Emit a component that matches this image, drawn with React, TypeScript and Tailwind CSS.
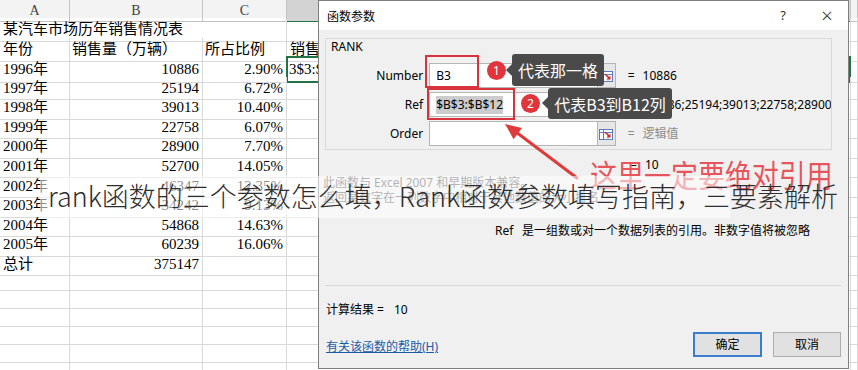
import React from "react";

const rows: [string, string, string][] = [
  ["1996年", "10886", "2.90%"],
  ["1997年", "25194", "6.72%"],
  ["1998年", "39013", "10.40%"],
  ["1999年", "22758", "6.07%"],
  ["2000年", "28900", "7.70%"],
  ["2001年", "52700", "14.05%"],
  ["2002年", "46347", "12.35%"],
  ["2003年", "34242", "9.13%"],
  ["2004年", "54868", "14.63%"],
  ["2005年", "60239", "16.06%"],
  ["总计", "375147", ""],
];

const cols = "grid grid-cols-[70px_133px_84px_564px_1fr]";
const cell = "border-r border-b border-[#d9d9d9] flex items-center whitespace-nowrap overflow-visible";

function Sheet() {
  return (
    <div className="flex flex-col font-['Liberation_Serif','Noto_Sans_CJK_SC',serif] text-[15px] text-black">
      <div className={`${cols} h-[18px] bg-[#f3f3f3] text-[14px] text-[#444]`}>
        {["A", "B", "C", "D", ""].map((l, i) => (
          <div
            key={i}
            className={`border-r border-b border-[#c4c4c4] flex items-center justify-center ${i === 3 ? "bg-[#d3d3d3] border-b-[#217346]" : ""}`}
          >
            {l}
          </div>
        ))}
      </div>
      <div className={`${cols} h-[20px]`}>
        <div className={`${cell} col-span-3 pl-[3px]`}>某汽车市场历年销售情况表</div>
        <div className={cell}></div>
        <div className={cell}></div>
      </div>
      <div className={`${cols} h-[19px]`}>
        <div className={`${cell} pl-[3px]`}>年份</div>
        <div className={`${cell} pl-[2px]`}>销售量（万辆）</div>
        <div className={`${cell} pl-[2px]`}>所占比例</div>
        <div className={`${cell} pl-[3px]`}>销售</div>
        <div className={cell}></div>
      </div>
      {rows.map((r, i) => (
        <div key={i} className={`${cols} h-[19.6px]`}>
          <div className={`${cell} pl-[3px]`}>{r[0]}</div>
          <div className={`${cell} justify-end pr-[3px]`}>{r[1]}</div>
          <div className={`${cell} justify-end pr-[3px]`}>{r[2]}</div>
          {i === 0 ? (
            <div className="border-2 border-[#217346] flex items-center whitespace-nowrap pl-[1px] -mt-[1px] -ml-[1px]">3$3:$B$12)</div>
          ) : (
            <div className={cell}></div>
          )}
          <div className={cell}></div>
        </div>
      ))}
      {[0, 1, 2, 3, 4, 5].map((i) => (
        <div key={i} className={`${cols} h-[18px]`}>
          <div className={cell}></div>
          <div className={cell}></div>
          <div className={cell}></div>
          <div className={cell}></div>
          <div className={cell}></div>
        </div>
      ))}
    </div>
  );
}

function Picker() {
  return (
    <div className="w-[18px] h-full bg-[#e6e6e6] border border-[#b5b5b5] border-l-0 flex items-center justify-center">
      <svg width="14" height="14" viewBox="0 0 14 14">
        <rect x="0.5" y="2.5" width="13" height="10" fill="#fff" stroke="#5a7db8" />
        <line x1="0.5" y1="5.5" x2="13.5" y2="5.5" stroke="#5a7db8" />
        <line x1="4.5" y1="2.5" x2="4.5" y2="12.5" stroke="#5a7db8" />
        <line x1="9" y1="5.5" x2="9" y2="12.5" stroke="#9fb3d6" />
        <path d="M6 5 L11 10" stroke="#d23030" strokeWidth="1.6" />
        <path d="M11.5 6.5 L11.5 10.5 L7.5 10.5 Z" fill="#d23030" />
      </svg>
    </div>
  );
}

function Field({ label, value, selected, result, gray }: { label: string; value: string; selected?: boolean; result: string; gray?: boolean }) {
  return (
    <div className="flex items-center h-[25px]">
      <div className="w-[98px] text-right">{label}</div>
      <div className="ml-[6px] w-[170px] h-full bg-white border border-[#b5b5b5] flex items-center pl-[6px]">
        {value && <span className={selected ? "bg-[#cccccc]" : ""}>{value}</span>}
      </div>
      <Picker />
      <div className={`ml-[12px] whitespace-nowrap overflow-hidden w-[205px] ${gray ? "text-[#8c8c8c]" : ""}`}>
        <span>=</span>
        <span className="ml-[8px]">{result}</span>
      </div>
    </div>
  );
}

function Dialog() {
  return (
    <div className="absolute left-[318px] top-0 w-[531px] h-[369px] border border-[#808080] bg-[#f0f0f0] flex flex-col font-['Noto_Sans','Noto_Sans_CJK_SC',sans-serif] text-[12px] text-black">
      <div className="h-[29px] bg-white flex items-center shrink-0">
        <span className="pl-[8px] font-['Noto_Sans_CJK_SC',sans-serif]">函数参数</span>
        <span className="ml-auto w-[20px] text-center text-[13px] text-[#333]">?</span>
        <span className="ml-[24px] mr-[11px] w-[20px] text-center text-[20px] leading-none text-[#333] font-light">×</span>
      </div>
      <div className="flex-1 px-[6px] flex flex-col pr-[7px]">
        <div className="mt-[8px] h-[112px] w-[507px] border border-[#d9d9d9] flex flex-col">
          <div className="pl-[5px] leading-[14px] mt-[1px]">RANK</div>
          <div className="mt-[9px] flex flex-col gap-[4px]">
            <Field label="Number" value="B3" result="10886" />
            <Field label="Ref" value="$B$3:$B$12" selected result="{10886;25194;39013;22758;28900;52700;46347}" />
            <Field label="Order" value="" result="逻辑值" gray />
          </div>
        </div>
        <div className="mt-[5px] h-[20px] flex items-center pl-[305px]">
          <span>=</span>
          <span className="ml-[8px]">10</span>
        </div>
        <div className="leading-[15px] -ml-[2px] text-[#555]">
          <div>此函数与 Excel 2007 和早期版本兼容。</div>
          <div>返回某数字在一列数字中相对于其他数值的大小排名</div>
        </div>
        <div className="mt-[18px] h-[16px] flex items-center pl-[170px]">
          <span className="w-[27px]">Ref</span>
          <span>是一组数或对一个数据列表的引用。非数字值将被忽略</span>
        </div>
        <div className="mt-[46px] border-t border-[#d9d9d9]"></div>
        <div className="flex justify-between">
          <div className="flex flex-col pl-[1px]">
            <div className="mt-[16px] h-[16px] flex items-center">
              <span>计算结果 =</span>
              <span className="ml-[10px]">10</span>
            </div>
            <div className="mt-[21px] h-[16px] flex items-center text-[#1d5aa8] underline">有关该函数的帮助(H)</div>
          </div>
          <div className="mt-[46px] flex gap-[11px] h-[25px]">
            <div className="w-[69px] h-full border-2 border-[#3a7dcc] bg-[#e1e1e1] flex items-center justify-center">确定</div>
            <div className="w-[68px] h-full border border-[#adadad] bg-[#e1e1e1] flex items-center justify-center">取消</div>
          </div>
        </div>
      </div>
    </div>
  );
}

function Annotations() {
  return (
    <>
      <div className="absolute left-[425px] top-[55px] w-[54px] h-[33px] border-2 border-[#d8323a]"></div>
      <div className="absolute left-[427px] top-[88px] w-[88px] h-[32px] border-2 border-[#d8323a]"></div>
      <div className="absolute left-[487px] top-[61px] w-[19px] h-[19px] rounded-full bg-[#e0353b] text-white text-[12px] font-['Noto_Sans',sans-serif] flex items-center justify-center">1</div>
      <div className="absolute left-[521px] top-[94px] w-[19px] h-[19px] rounded-full bg-[#e0353b] text-white text-[12px] font-['Noto_Sans',sans-serif] flex items-center justify-center">2</div>
      <div className="absolute left-[512px] top-[54px] w-[92px] h-[32px] bg-[#4a4a4a] rounded-[3px] text-white text-[16px] font-['Noto_Sans_CJK_SC',sans-serif] flex items-center justify-center">
        <div className="absolute -left-[6px] top-[10px] w-0 h-0 border-y-[6px] border-y-transparent border-r-[6px] border-r-[#4a4a4a]"></div>
        代表那一格
      </div>
      <div className="absolute left-[548px] top-[88px] w-[124px] h-[31px] bg-[#4a4a4a] rounded-[3px] text-white text-[16px] font-['Noto_Sans_CJK_SC',sans-serif] flex items-center justify-center">
        <div className="absolute -left-[6px] top-[9px] w-0 h-0 border-y-[6px] border-y-transparent border-r-[6px] border-r-[#4a4a4a]"></div>
        代表B3到B12列
      </div>
      <svg className="absolute left-0 top-0" width="858" height="370">
        <line x1="577" y1="178" x2="516" y2="132" stroke="#e03a3a" strokeWidth="3" strokeLinecap="round" />
        <polygon points="505,124 522,128 513.6,139.2" fill="#e03a3a" />
      </svg>
      <div className="absolute left-[590px] top-[158px] text-[31px] leading-none whitespace-nowrap text-[#e6555c] font-['Noto_Sans_CJK_SC',sans-serif] scale-x-[0.87] origin-left">
        这里一定要绝对引用
      </div>
    </>
  );
}

function Overlay() {
  return (
    <>
      <div className="absolute left-[40px] top-[176px] w-[690px] h-[42px] bg-[rgba(255,255,255,0.55)]"></div>
      <div className="absolute left-[48px] top-[182px] text-[27px] leading-none whitespace-nowrap text-[#2e2e2e] font-light font-['Noto_Sans_CJK_SC',sans-serif]">
        rank函数的三个参数怎么填，Rank函数参数填写指南，三要素解析
      </div>
    </>
  );
}

export default function App() {
  return (
    <div className="relative w-[858px] h-[370px] overflow-hidden bg-white">
      <Sheet />
      <Dialog />
      <Annotations />
      <Overlay />
    </div>
  );
}
